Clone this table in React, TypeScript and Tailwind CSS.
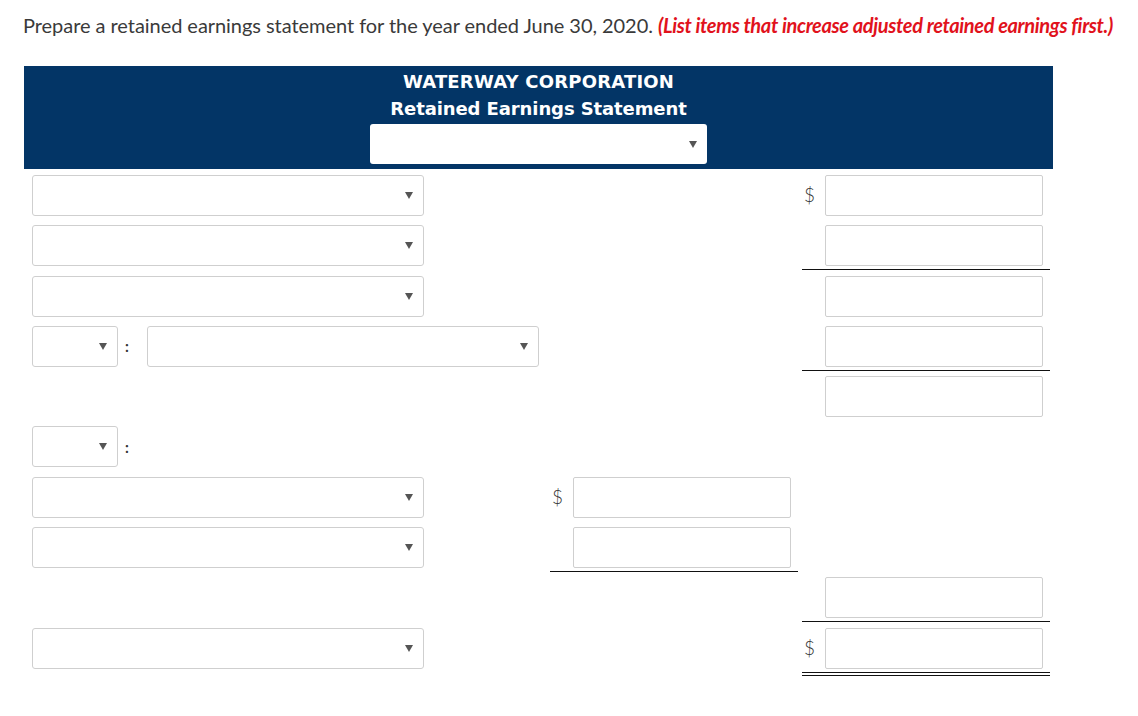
import React from "react";

const font = { fontFamily: "Lato, 'Open Sans', sans-serif" };
const titleFont = { fontFamily: "'DejaVu Sans', Verdana, sans-serif" };

function Arrow() {
  return (
    <svg width="8" height="7" viewBox="0 0 8 7" className="shrink-0">
      <path d="M0 0h8L4 7z" fill="#555" />
    </svg>
  );
}

function Select({ w }: { w: string }) {
  return (
    <div
      className={`${w} h-[41px] rounded-[3px] border border-[#cfcfcf] bg-white flex items-center justify-end pr-[10px]`}
    >
      <Arrow />
    </div>
  );
}

function Amount({ dollar, line }: { dollar?: boolean; line?: "single" | "double" }) {
  return (
    <div className="w-[248px] flex flex-col">
      <div className="flex items-center h-[41px] mt-[5px]">
        <span className="w-[23px] pl-[2px] text-[19px] font-light text-[#333]">{dollar ? "$" : ""}</span>
        <div className="w-[218px] h-[41px] rounded-[2px] border border-[#cfcfcf] bg-white" />
      </div>
      {line && <div className="mt-[3px] h-px bg-[#111]" />}
      {line === "double" && <div className="mt-[2px] h-px bg-[#111]" />}
    </div>
  );
}

function Empty() {
  return <div className="w-[248px]" />;
}

function Row({
  left,
  mid,
  right,
}: {
  left?: React.ReactNode;
  mid?: React.ReactNode;
  right?: React.ReactNode;
}) {
  return (
    <div className="flex h-[50.3px]">
      <div className="w-[526px] pl-[8px] pt-[5px] flex items-start">{left}</div>
      {mid ?? <Empty />}
      <div className="ml-[4px]">{right ?? <Empty />}</div>
    </div>
  );
}

function SplitLeft({ withMain }: { withMain?: boolean }) {
  return (
    <div className="flex items-center">
      <Select w="w-[86px]" />
      <span className="w-[29px] pl-[7px] text-[15px] font-bold text-[#333]">:</span>
      {withMain && <Select w="w-[392px]" />}
    </div>
  );
}

export default function App() {
  return (
    <div className="w-[1138px] h-[716px] bg-white text-[#333]" style={font}>
      <p className="pl-[23px] pt-[12px] text-[20px] leading-[26px] text-[#3a3a3a] tracking-[-0.05px]">
        Prepare a retained earnings statement for the year ended June 30, 2020.{" "}
        <span className="text-[#e1121c] font-bold italic tracking-[-0.35px]">
          (List items that increase adjusted retained earnings first.)
        </span>
      </p>

      <div className="ml-[24px] mt-[28px] w-[1029px]">
        <div className="bg-[#033566] flex flex-col items-center pt-[1.5px] pb-[5px]" style={titleFont}>
          <div className="text-white text-[18px] leading-[27px] font-bold tracking-[0.2px]">WATERWAY CORPORATION</div>
          <div className="text-white font-bold text-[18px] leading-[27px] tracking-[-0.1px]">Retained Earnings Statement</div>
          <div className="mt-[2.5px] w-[337px] h-[40px] rounded-[3px] bg-white flex items-center justify-end pr-[10px]">
            <Arrow />
          </div>
        </div>

        <div className="pt-px">
          <Row left={<Select w="w-[392px]" />} right={<Amount dollar />} />
          <Row left={<Select w="w-[392px]" />} right={<Amount line="single" />} />
          <Row left={<Select w="w-[392px]" />} right={<Amount />} />
          <Row left={<SplitLeft withMain />} right={<Amount line="single" />} />
          <Row right={<Amount />} />
          <Row left={<SplitLeft />} />
          <Row left={<Select w="w-[392px]" />} mid={<Amount dollar />} />
          <Row left={<Select w="w-[392px]" />} mid={<Amount line="single" />} />
          <Row right={<Amount line="single" />} />
          <Row left={<Select w="w-[392px]" />} right={<Amount dollar line="double" />} />
        </div>
      </div>
    </div>
  );
}
